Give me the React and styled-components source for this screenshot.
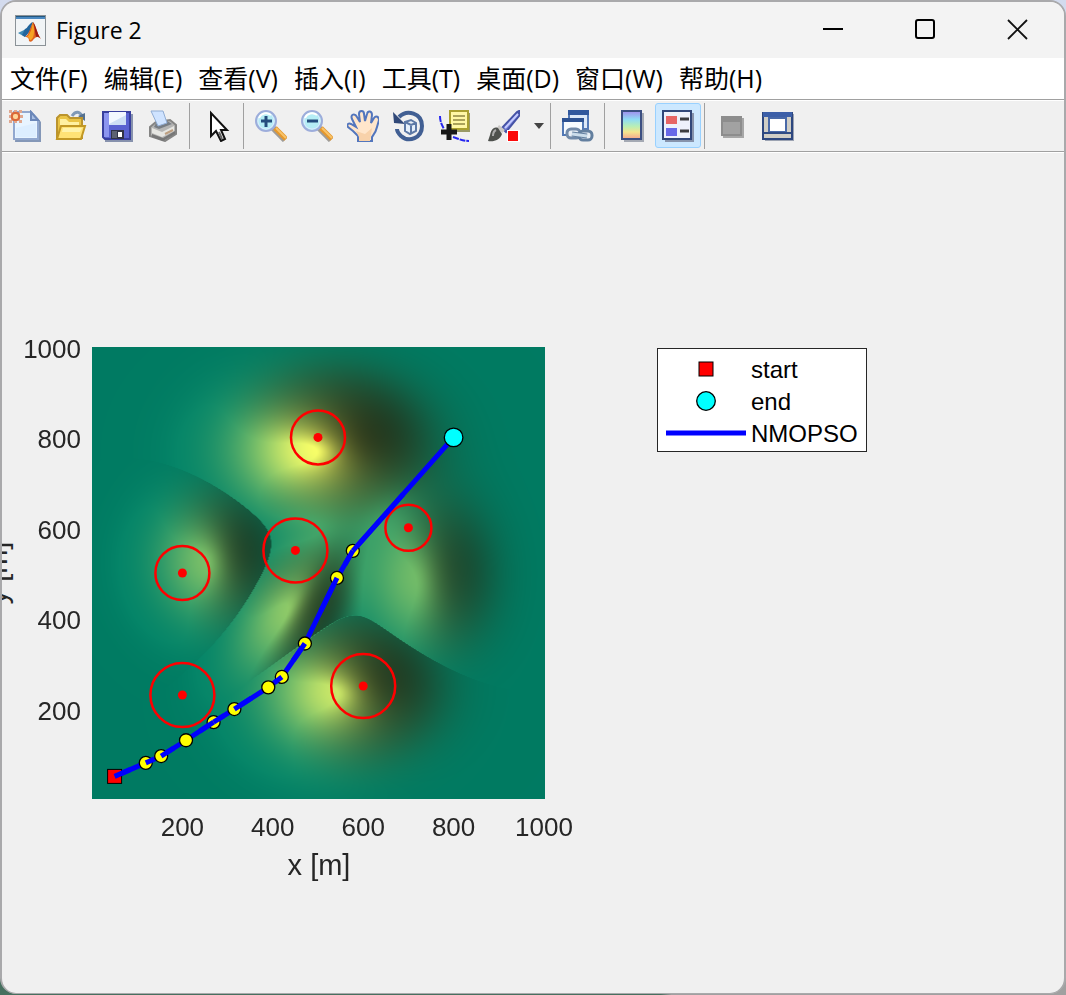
import React, {useLayoutEffect, useRef} from "react";
import styled, {createGlobalStyle, css} from "styled-components";

const GlobalStyle = createGlobalStyle`
  * {
    box-sizing: border-box;
  }
  body {
    margin: 0;
    background: linear-gradient(#d3dbee, #c9d0da 50%, #3f6e5c);
  }
`;

const Window = styled.main`
  display: flex;
  flex-direction: column;
  min-height: calc(100vh - 1px);
  overflow: hidden;
  border: 2px solid #a9a9ab;
  border-bottom-width: 1px;
  border-radius: 16px;
  background: #f0f0f0;
  color: #000;
`;

const Desktop = styled.div`
  padding-bottom: 1px;
  background: linear-gradient(90deg, #47705f 62%, #a0a0a0 63%) bottom / 100% 20px no-repeat;
`;

const TitleBar = styled.header`
  display: flex;
  align-items: center;
  height: 56px;
  padding-left: 13px;
  background: #f3f3f3;
`;

const Title = styled.h1`
  flex: 1;
  margin: 0 0 0 10px;
  font: 23px "Open Sans", "Noto Sans", sans-serif;
`;

const CaptionButton = styled.button`
  display: grid;
  place-items: center;
  width: 92px;
  height: 56px;
  padding: 0;
  border: 0;
  background: transparent;
`;

const MenuBar = styled.nav`
  display: flex;
  align-items: center;
  gap: 16px;
  height: 41px;
  padding: 0 0 2px 8px;
  background: #fff;
`;

const MenuItem = styled.button`
  padding: 0;
  border: 0;
  background: transparent;
  color: #000;
  font: 25px "Open Sans", "Noto Sans CJK SC", sans-serif;
  line-height: 38px;
  white-space: nowrap;
`;

const ToolBar = styled.div`
  display: flex;
  align-items: center;
  height: 53px;
  border-top: 1px solid #a0a0a0;
  border-bottom: 1px solid #a0a0a0;
  box-shadow: inset 0 1px #fff, 0 1px #fff;
`;

const ToolButton = styled.button`
  display: flex;
  align-items: center;
  justify-content: center;
  width: 46px;
  height: 45px;
  padding: 0;
  border: 1px solid transparent;
  border-radius: 3px;
  background: transparent;
  ${({$active}) => $active && css`
    border-color: #99d1ff;
    background: #cce8ff;
  `}
  ${({$split}) => $split && css`
    justify-content: flex-end;
    gap: 14px;
    width: 69px;
    padding-right: 2px;
  `}
`;

const Separator = styled.span`
  width: 1px;
  height: 46px;
  margin: 0 4px 0 3px;
  background: #a0a0a0;
`;

const Figure = styled.section`
  display: flex;
  flex: 1;
  align-items: flex-start;
  padding-top: 178px;
`;

const Chart = styled.svg`
  flex: 0 1 574px;
  min-width: 0;
  height: auto;
  font-family: "Liberation Sans", Arial, sans-serif;
  font-size: 26px;
  fill: #262626;
`;

const SurfaceCanvas = styled.canvas`
  display: block;
  width: 100%;
  height: 100%;
`;

const Legend = styled.ul`
  margin: 18px 0 0 81px;
  padding: 4px 8px 2px;
  border: 1px solid #262626;
  background: #fff;
  list-style: none;
  font: 24px "Liberation Sans", Arial, sans-serif;
`;

const LegendRow = styled.li`
  display: flex;
  align-items: center;
  gap: 5px;
  height: 32px;
  padding-top: 2px;
`;

const LegendMark = styled.svg`
  width: 80px;
  height: 32px;
`;

const menus = ["文件(F)", "编辑(E)", "查看(V)", "插入(I)", "工具(T)", "桌面(D)", "窗口(W)", "帮助(H)"];

const Icon = ({children}) => (
  <svg width="32" height="32" viewBox="0 0 32 32" aria-hidden="true">{children}</svg>
);

const MatlabIcon = () => (
  <svg width="31" height="31" viewBox="0 0 31 31" aria-hidden="true">
    <rect x="0.5" y="0.5" width="30" height="30" fill="#f1f4f6" stroke="#8b9297"/>
    <path d="M1 1h29v3H1z" fill="#4a88c0"/>
    <path d="M1 1h29v1H1z" fill="#23577f"/>
    <path d="M3 18l8-4 3 3-4 5z" fill="#3c8ab5"/>
    <path d="M10 14c3-1 4-6 8-7l-3 9-5 6-3-2z" fill="#22659c"/>
    <path d="M18 7c3 3 4 12 8 17-4-4-6-1-8 1-1 2-3 2-4 1 0-3-1-4-4-4 4-2 5-9 8-15z" fill="#e0641f"/>
    <path d="M18 7c-1 6-2 11-6 15 3 0 2 4 4 3 3-2 4-8 2-18z" fill="#f6a324"/>
    <path d="M18 7c3 3 4 12 8 17-3-3-4-2-5-2-1-4-1-9-3-15z" fill="#9c1d17"/>
  </svg>
);

const NewIcon = () => (
  <Icon>
    <path d="M8 4h17l7 8v20H6z" fill="#8497b7"/>
    <path d="M5 2h17l7 8v19H5z" fill="#e8f4ff" stroke="#92a8cf" strokeWidth="2"/>
    <path d="M22 2v8h7z" fill="#a8bfe4" stroke="#6b87b9" strokeWidth="2"/>
    <path d="M7 18l20-5v14H7z" fill="#d5e9ff" opacity=".6"/>
    <path d="M0 0h3v3H0zM10 0h3v3h-3zM0 10h3v3H0zM10 10h3v3h-3zM5-1h3v3H5zM5 10h3v3H5zM-1 5h3v3h-3zM11 5h3v3h-3z" fill="#e0a78f"/>
    <rect x="2" y="2" width="9" height="9" rx="3" fill="#db6939"/>
    <rect x="4" y="4" width="5" height="5" rx="2" fill="#ffd79b"/>
  </Icon>
);

const OpenIcon = () => (
  <Icon>
    <path d="M17 6c4-6 8-4 10 0" fill="none" stroke="#8099b6" strokeWidth="3"/>
    <path d="M23 6l7-3v8z" fill="#55718f"/>
    <path d="M2 8l3-3h7l3 3h12v20H2z" fill="#eac445" stroke="#bb942e" strokeWidth="2"/>
    <path d="M5 9h6l3 3h10v5H5z" fill="#fff0a1"/>
    <path d="M6 16h24l-4 13H2z" fill="#ffe275" stroke="#c29825" strokeWidth="2"/>
    <path d="M8 18h19l-2 4H7z" fill="#fff3ab"/>
  </Icon>
);

const SaveIcon = () => (
  <Icon>
    <path d="M4 4h28v28H4z" fill="#8792ad"/>
    <path d="M2 2h27v27H4l-2-2z" fill="#5962d0" stroke="#383f9e" strokeWidth="2"/>
    <path d="M3 3h5v24H3z" fill="#8c95ef"/>
    <path d="M8 2h17v13H8z" fill="#f2f8ff"/>
    <path d="M8 14L25 5v10H8z" fill="#cddff5"/>
    <path d="M10 20h13v9H10z" fill="#303347"/>
    <path d="M17 22h4v5h-4z" fill="#fff"/>
    <path d="M11 21h5v7h-5z" fill="#5c6272"/>
  </Icon>
);

const PrintIcon = () => (
  <Icon>
    <path d="M3 17l6-5 14-2 6 5v9l-11 7-15-5z" fill="#b5b5b4" stroke="#858584" strokeWidth="2"/>
    <path d="M9 13l11-2 5 3-13 5-5-2z" fill="#777d84"/>
    <path d="M4 1h12l4 12-9 3z" fill="#cfe3ff" stroke="#91add4"/>
    <path d="M5 18l10 4 12-6v5l-12 6-10-4z" fill="#e6e6e2"/>
    <path d="M5 24l11 4 12-7v3l-12 7-11-4z" fill="#777"/>
    <path d="M18 24l8-4" stroke="#bd9f81" strokeWidth="2"/>
  </Icon>
);

const PointerIcon = () => (
  <Icon>
    <path d="M10 3v23l5-5 5 10 4-2-4-9h6z" fill="#fff" stroke="#111" strokeWidth="2"/>
    <path d="M18 22l3 7" stroke="#666" strokeWidth="2"/>
  </Icon>
);

const ZoomIcon = ({plus}) => (
  <Icon>
    <path d="M18 18l12 12" stroke="#9f9c99" strokeWidth="6"/>
    <path d="M20 18l11 11" stroke="#e5982d" strokeWidth="5"/>
    <path d="M21 18l10 10" stroke="#f8c36a" strokeWidth="2"/>
    <circle cx="11" cy="11" r="10" fill="#bcebf3" stroke="#9daddb" strokeWidth="2"/>
    <circle cx="11" cy="11" r="8" fill="#b5edf5" stroke="#dbeaff"/>
    <path d="M4 8c2-5 8-6 12-3" fill="none" stroke="#fff" strokeWidth="2"/>
    <path d={plus ? "M6 11h11M11 6v11" : "M6 11h11"} stroke="#244c7d" strokeWidth="3"/>
  </Icon>
);

const HandIcon = () => (
  <Icon>
    <path
      d="M11 31v-5L6 21l-5-4c-2-3 1-4 3-3l5 3-4-8c-2-5 3-6 5-2l3 5-1-8c0-4 5-4 5 0l1 7 2-7c1-4 5-3 5 1l-1 8 3-5c2-3 5-1 5 2l-2 7c-1 5-3 7-5 10v4z"
      fill="#ffe6cb" stroke="#5376bd" strokeWidth="2"
    />
    <path d="M12 31v-4l-3-6 9 3 7-6-2 13z" fill="#f8d2aa"/>
  </Icon>
);

const RotateIcon = () => (
  <Icon>
    <path d="M6 7c8-8 23-4 23 9 0 12-13 17-21 10-2-2-4-4-4-7" fill="none" stroke="#415f93" strokeWidth="4"/>
    <path d="M0 2l1 11 11 1z" fill="#304878"/>
    <path d="M12 12l6-2 5 3v8l-6 3-5-3zM12 12l6 3 5-2M18 15v8" fill="#e6f0fb" stroke="#5d79a6" strokeWidth="2"/>
  </Icon>
);

const DataTipIcon = () => (
  <Icon>
    <path d="M1 6c0 6 2 9 4 13M14 27c6 2 10 4 16 4" fill="none" stroke="#2525f0" strokeWidth="2" strokeDasharray="6 1"/>
    <path d="M13 3h18v19H13z" fill="#999967"/>
    <path d="M11 1h18v18H11z" fill="#fff7a5" stroke="#aaa02f" strokeWidth="2"/>
    <path d="M14 6h12M14 10h12M14 14h12" stroke="#aaa25b" strokeWidth="2"/>
    <path d="M2 22h16M10 14v16" stroke="#181818" strokeWidth="5"/>
  </Icon>
);

const BrushIcon = () => (
  <Icon>
    <path d="M14 18L29 2l2-1v5L18 22z" fill="#6f7bd3" stroke="#4653a6" strokeWidth="2"/>
    <path d="M17 18L30 4" stroke="#c5cbff" strokeWidth="2"/>
    <path d="M11 15l6 5-3 3-5-5z" fill="#cac8c5"/>
    <path d="M10 18c-5-2-7 3-8 7l-2 6c6 1 12-1 14-7z" fill="#4e514d"/>
    <path d="M8 20c-2 1-3 3-3 6" fill="none" stroke="#aaa" strokeWidth="2"/>
    <path d="M19 20h13v12H19z" fill="#fff"/>
    <path d="M20 21h10v10H20z" fill="#fb0b0b"/>
  </Icon>
);

const LinkIcon = () => (
  <Icon>
    <path d="M7 1h19v18H7z" fill="#dce8f8" stroke="#547ab8" strokeWidth="2"/>
    <path d="M6 0h21v5H6z" fill="#31589d"/>
    <path d="M1 9h20v16H1z" fill="#f6fbff" stroke="#5178b5" strokeWidth="2"/>
    <path d="M0 8h22v4H0z" fill="#2d5292"/>
    <rect x="5" y="19" width="13" height="9" rx="4" fill="#e8eef5" stroke="#718aa9" strokeWidth="3"/>
    <rect x="17" y="21" width="13" height="9" rx="4" fill="#e8eef5" stroke="#637f9f" strokeWidth="3"/>
    <path d="M10 24l15 2" stroke="#637f9f" strokeWidth="5"/>
    <path d="M10 24l15 2" stroke="#cbdcea" strokeWidth="3"/>
  </Icon>
);

const ColorBarIcon = () => (
  <Icon>
    <defs>
      <linearGradient id="jet" x2="0" y2="1">
        <stop offset="0" stopColor="#a18bed"/>
        <stop offset=".3" stopColor="#8fdcf5"/>
        <stop offset=".55" stopColor="#b9efb5"/>
        <stop offset=".75" stopColor="#f3e58f"/>
        <stop offset="1" stopColor="#f4a48e"/>
      </linearGradient>
    </defs>
    <path d="M8 3h20v29H8z" fill="#a4a9b3"/>
    <path d="M6 1h19v28H6z" fill="url(#jet)" stroke="#3b4f82" strokeWidth="2"/>
  </Icon>
);

const LegendIcon = () => (
  <Icon>
    <path d="M3 3h29v29H3z" fill="#8793ab"/>
    <path d="M1 1h28v28H1z" fill="#eef1fb" stroke="#314779" strokeWidth="2"/>
    <path d="M4 6h11v8H4z" fill="#e76565"/>
    <path d="M4 18h11v8H4z" fill="#6868e8"/>
    <path d="M18 9h9M18 21h9" stroke="#3c3c40" strokeWidth="3"/>
  </Icon>
);

const HidePlotIcon = () => (
  <Icon>
    <path d="M7 8h21v20H7z" fill="#a7a7a7"/>
    <path d="M5 6h21v20H5z" fill="#8d8d8d"/>
    <path d="M7 12h17v12H7z" fill="#a2a2a2"/>
  </Icon>
);

const ShowPlotIcon = () => (
  <Icon>
    <path d="M3 4h29v27H3z" fill="#9ca3b2"/>
    <path d="M1 3h29v26H1z" fill="#f6f6f2" stroke="#2d477f" strokeWidth="2"/>
    <path d="M1 2h29v5H1z" fill="#3c5fa8"/>
    <path d="M2 7h5v15H2zM24 7h5v15h-5zM2 23h27v5H2z" fill="#d0cec6"/>
    <path d="M7 8h17v14H7z" fill="#fff" stroke="#4969a8" strokeWidth="2"/>
    <path d="M2 23h27" stroke="#2f4b84" strokeWidth="2"/>
  </Icon>
);

const toolGroups = [
  [["新建图窗", <NewIcon/>], ["打开文件", <OpenIcon/>], ["保存图窗", <SaveIcon/>], ["打印图窗", <PrintIcon/>]],
  [["编辑绘图", <PointerIcon/>]],
  [
    ["放大", <ZoomIcon plus/>],
    ["缩小", <ZoomIcon/>],
    ["平移", <HandIcon/>],
    ["三维旋转", <RotateIcon/>],
    ["数据游标", <DataTipIcon/>],
    ["刷亮数据", <BrushIcon/>, {$split: true}],
  ],
  [["链接绘图", <LinkIcon/>]],
  [["插入颜色栏", <ColorBarIcon/>], ["插入图例", <LegendIcon/>, {$active: true}]],
  [["隐藏绘图工具", <HidePlotIcon/>], ["显示绘图工具", <ShowPlotIcon/>]],
];

// Plot box inside the chart, in chart units
const PLOT = {left: 90, top: 17, size: 452};
const px = (x) => PLOT.left + (x / 1000) * PLOT.size;
const py = (y) => PLOT.top + PLOT.size - (y / 1000) * PLOT.size;

const ticks = [200, 400, 600, 800, 1000];

const threats = [
  [500, 800, 27],
  [450, 550, 32],
  [200, 500, 27],
  [700, 600, 23],
  [200, 230, 32],
  [600, 250, 32],
];

// [x, y, line parts that run over the marker]
const path = [
  [50, 50, "out"],
  [119, 80, "out"],
  [153, 95, "out"],
  [208, 130, ""],
  [269, 170, "in out"],
  [315, 199, "out"],
  [390, 247, ""],
  [420, 270, "in"],
  [471, 344, "in"],
  [542, 489, "in"],
  [577, 549, "in out"],
  [800, 800, ""],
];

// Hills of the terrain: centre, spreads, tilt of the long axis, height.
// Hills of one ridge add up, and the highest ridge is the ground.
const ridges = [
  [
    {x: 503, y: 775, sx: 118, sy: 90, tilt: 0, h: 262},
    {x: 440, y: 425, sx: 62, sy: 112, tilt: -0.6, h: 150},
    {x: 725, y: 490, sx: 84, sy: 108, tilt: 0, h: 120},
  ],
  [{x: 550, y: 240, sx: 108, sy: 90, tilt: 0, h: 215}],
  [{x: 262, y: 530, sx: 80, sy: 90, tilt: 0, h: 130}],
];

const heightAt = (x, y) => {
  const heights = ridges.map((hills) => hills.reduce((sum, hill) => {
    const c = Math.cos(hill.tilt);
    const s = Math.sin(hill.tilt);
    const u = (c * (x - hill.x) + s * (y - hill.y)) / hill.sx;
    const v = (c * (y - hill.y) - s * (x - hill.x)) / hill.sy;
    return sum + hill.h * Math.exp(-(u * u + v * v) / 2);
  }, 0));
  return Math.max(...heights);
};

const LIGHT = [-0.55, -0.16, 0.8];

const paintSurface = (canvas) => {
  const {width, height} = canvas;
  const ctx = canvas.getContext("2d");
  const image = ctx.createImageData(width, height);
  for (let j = 0; j < height; j++) {
    for (let i = 0; i < width; i++) {
      const x = (i / width) * 1000;
      const y = 1000 - (j / height) * 1000;
      const z = heightAt(x, y);
      const dx = heightAt(x + 1, y) - z;
      const dy = heightAt(x, y + 1) - z;
      const dot = (LIGHT[2] - LIGHT[0] * dx - LIGHT[1] * dy) / Math.sqrt(1 + dx * dx + dy * dy);
      const shade = Math.min(1.02, 0.3 + 0.82 * Math.max(0, dot));
      const t = Math.min(1, z / 275);
      const k = (j * width + i) * 4;
      image.data[k] = 255 * t * shade;
      image.data[k + 1] = (128 + 127 * t) * shade;
      image.data[k + 2] = 102 * shade;
      image.data[k + 3] = 255;
    }
  }
  ctx.putImageData(image, 0, 0);
};

const Surface = () => {
  const ref = useRef(null);
  useLayoutEffect(() => paintSurface(ref.current), []);
  return <SurfaceCanvas ref={ref} width={PLOT.size} height={PLOT.size}/>;
};

const PathSegment = ({from, to}) => (
  <line x1={px(from[0])} y1={py(from[1])} x2={px(to[0])} y2={py(to[1])} stroke="#0000ff" strokeWidth="5"/>
);

const TerrainChart = () => (
  <Chart viewBox="0 0 574 560" role="img" aria-label="NMOPSO path over terrain">
    <foreignObject x={PLOT.left} y={PLOT.top} width={PLOT.size + 1} height={PLOT.size}>
      <Surface/>
    </foreignObject>
    {threats.map(([x, y, r]) => (
      <g key={`${x}-${y}`}>
        <circle cx={px(x)} cy={py(y)} r={r} fill="none" stroke="#ff0000" strokeWidth="2.5"/>
        <circle cx={px(x)} cy={py(y)} r="4.5" fill="#ff0000"/>
      </g>
    ))}
    {path.slice(1).map((to, i) => <PathSegment key={i} from={path[i]} to={to}/>)}
    <rect x={px(50) - 7} y={py(50) - 7} width="14" height="14" fill="#ff0000" stroke="#000"/>
    {path.slice(1, -1).map(([x, y]) => (
      <circle key={x} cx={px(x)} cy={py(y)} r="6.5" fill="#ffff00" stroke="#000" strokeWidth="1.3"/>
    ))}
    {path.slice(1).map((to, i) => {
      const from = path[i];
      const mid = [(from[0] + to[0]) / 2, (from[1] + to[1]) / 2];
      return (
        <g key={i}>
          {from[2].includes("out") && <PathSegment from={from} to={mid}/>}
          {to[2].includes("in") && <PathSegment from={mid} to={to}/>}
        </g>
      );
    })}
    <circle cx={px(800)} cy={py(800)} r="9.3" fill="#00ffff" stroke="#000" strokeWidth="1.3"/>
    {ticks.map((v) => (
      <g key={v}>
        <text x={px(v)} y="506" textAnchor="middle">{v}</text>
        <text x="79" y={py(v) + 11} textAnchor="end">{v}</text>
      </g>
    ))}
    <text x="317" y="545" fontSize="29" textAnchor="middle">x [m]</text>
    <text transform="translate(5 243) rotate(-90)" fontSize="29" textAnchor="middle">y [m]</text>
  </Chart>
);

const legendItems = [
  ["start", <rect x="33" y="8" width="14" height="14" fill="#ff0000" stroke="#000"/>],
  ["end", <circle cx="40" cy="15" r="9.3" fill="#00ffff" stroke="#000" strokeWidth="1.3"/>],
  ["NMOPSO", <path d="M0 15h80" stroke="#0000ff" strokeWidth="5"/>],
];

const App = () => (
  <Desktop>
    <GlobalStyle/>
    <Window>
      <TitleBar>
        <MatlabIcon/>
        <Title>Figure 2</Title>
        <CaptionButton aria-label="最小化">
          <svg width="22" height="22"><path d="M0 10h20" stroke="#000" strokeWidth="2"/></svg>
        </CaptionButton>
        <CaptionButton aria-label="最大化">
          <svg width="22" height="22">
            <rect x="1" y="1" width="18" height="18" rx="2" fill="none" stroke="#000" strokeWidth="2"/>
          </svg>
        </CaptionButton>
        <CaptionButton aria-label="关闭">
          <svg width="22" height="22"><path d="M1 1l19 19M20 1L1 20" stroke="#111" strokeWidth="1.8"/></svg>
        </CaptionButton>
      </TitleBar>
      <MenuBar>
        {menus.map((name) => <MenuItem key={name}>{name}</MenuItem>)}
      </MenuBar>
      <ToolBar role="toolbar">
        {toolGroups.map((group, i) => (
          <React.Fragment key={i}>
            {i > 0 && <Separator/>}
            {group.map(([name, icon, state]) => (
              <ToolButton key={name} aria-label={name} {...state}>
                {icon}
                {state?.$split && (
                  <svg width="10" height="6" aria-hidden="true"><path d="M0 0h10L5 6z" fill="#444"/></svg>
                )}
              </ToolButton>
            ))}
          </React.Fragment>
        ))}
      </ToolBar>
      <Figure>
        <TerrainChart/>
        <Legend>
          {legendItems.map(([name, mark]) => (
            <LegendRow key={name}>
              <LegendMark aria-hidden="true">{mark}</LegendMark>
              {name}
            </LegendRow>
          ))}
        </Legend>
      </Figure>
    </Window>
  </Desktop>
);

export default App;
